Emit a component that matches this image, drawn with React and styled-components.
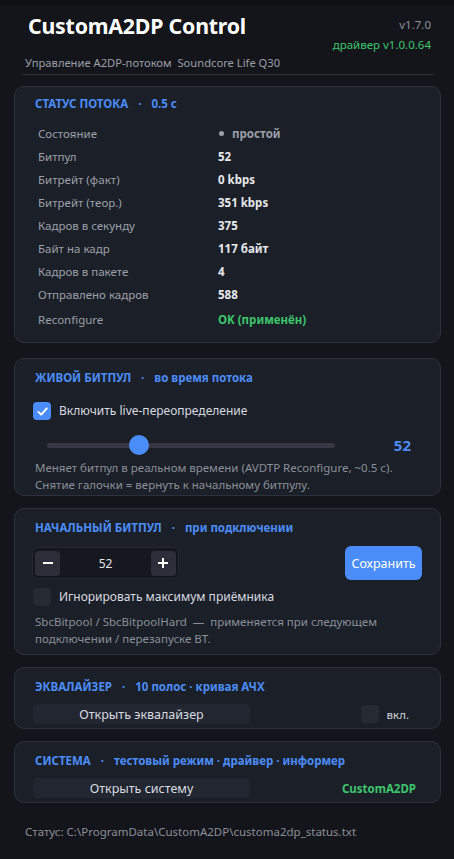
import React from "react";
import styled, { createGlobalStyle } from "styled-components";

const GlobalStyle = createGlobalStyle`
  html, body {
    margin: 0;
    padding: 0;
    background: #14151a;
  }
  * {
    box-sizing: border-box;
  }
`;

const BLUE = "#4b8df8";
const GREEN = "#3cc56c";

const Window = styled.div`
  width: 454px;
  min-height: 859px;
  background: #14151a;
  border-top: 5px solid #0e0f12;
  padding: 0 13px 0 14px;
  font-family: "Noto Sans", "Open Sans", sans-serif;
  color: #e4e6ea;
  display: flex;
  flex-direction: column;
`;

const Header = styled.header`
  display: flex;
  justify-content: space-between;
  align-items: flex-start;
  padding: 6px 10px 0 14px;
`;

const Title = styled.h1`
  margin: 0;
  font-size: 21.3px;
  line-height: 30px;
  font-weight: 700;
  color: #ffffff;
  letter-spacing: -0.2px;
`;

const Versions = styled.div`
  display: flex;
  flex-direction: column;
  align-items: flex-end;
  padding-top: 4px;
  font-size: 11.5px;
  line-height: 20px;
`;

const Version = styled.span`
  color: ${(p) => p.$color || "#8b909b"};
`;

const Subtitle = styled.div`
  padding: 0 0 0 11px;
  font-size: 11.2px;
  line-height: 16px;
  color: #9a9ea8;
`;

const Divider = styled.hr`
  margin: 3px 7px 11px 8px;
  border: none;
  border-top: 1px solid #2a2d36;
`;

const Panels = styled.div`
  display: flex;
  flex-direction: column;
  gap: 12px;
`;

const Panel = styled.section`
  background: #1b1f27;
  border: 1px solid #2c313b;
  border-radius: 10px;
  margin-bottom: ${(p) => p.$after ?? 0}px;
  padding: ${(p) => p.$top ?? 11}px 18px ${(p) => p.$bottom ?? 4}px 18px;
  display: flex;
  flex-direction: column;
`;

const PanelTitle = styled.div`
  padding-left: 2px;
  font-size: 11.5px;
  line-height: 16px;
  font-weight: 700;
  color: ${BLUE};
  white-space: nowrap;
`;

const Dot = styled.span`
  margin: 0 10px;
`;

const StatGrid = styled.div`
  display: grid;
  grid-template-columns: 180px 1fr;
  grid-auto-rows: 23px;
  align-items: center;
  margin-top: 10px;
  padding-left: 5px;
  font-size: 11.5px;
`;

const Label = styled.span`
  color: #9ba0aa;
  ${(p) => p.$last && "margin-top: 4px;"}
`;

const Value = styled.span`
  font-weight: 700;
  color: ${(p) => p.$color || "#e6e8ec"};
  ${(p) => p.$last && "margin-top: 4px;"}
`;

const StateDot = styled.span`
  display: inline-block;
  width: 5px;
  height: 5px;
  border-radius: 50%;
  background: #9ba0aa;
  margin: 0 8px 2px 1px;
  vertical-align: middle;
`;

const CheckRow = styled.label`
  display: flex;
  align-items: center;
  gap: 8px;
  margin-top: ${(p) => p.$mt || 0}px;
  font-size: 12px;
  line-height: 20px;
  color: #d8dbe0;
  white-space: nowrap;
`;

const Box = styled.span`
  width: 18px;
  height: 18px;
  flex: none;
  border-radius: 4px;
  background: ${(p) => (p.$checked ? BLUE : "#262a33")};
  display: flex;
  align-items: center;
  justify-content: center;
`;

const SliderRow = styled.div`
  display: flex;
  align-items: center;
  height: 24px;
  margin-top: 12px;
  padding: 0 11px 0 14px;
`;

const Track = styled.div`
  position: relative;
  width: 288px;
  height: 5px;
  border-radius: 3px;
  background: #363944;
`;

const Thumb = styled.div`
  position: absolute;
  top: 50%;
  width: 20px;
  height: 20px;
  margin: -10px 0 0 -10px;
  border-radius: 50%;
  background: ${BLUE};
`;

const SliderValue = styled.span`
  margin-left: auto;
  font-size: 15px;
  font-weight: 700;
  color: ${BLUE};
`;

const Note = styled.p`
  margin: ${(p) => p.$mt || 0}px 0 0 2px;
  font-size: 11.5px;
  line-height: 17px;
  color: #8a8f99;
`;

const BitpoolRow = styled.div`
  display: flex;
  align-items: center;
  justify-content: space-between;
  margin-top: 10px;
`;

const Spin = styled.div`
  display: flex;
  align-items: center;
  justify-content: space-between;
  width: 147px;
  height: 32px;
  padding: 0 2px;
  margin-left: -1px;
  border-radius: 6px;
  background: #15181e;
  border: 1px solid #242831;
  font-size: 12px;
  color: #e4e6ea;
`;

const SpinButton = styled.button`
  width: 25px;
  height: 25px;
  border: none;
  border-radius: 4px;
  background: #2c2f3a;
  padding: 0;
  display: flex;
  align-items: center;
  justify-content: center;
`;

const SaveButton = styled.button`
  width: 77px;
  height: 34px;
  padding: 0;
  border: none;
  border-radius: 6px;
  background: ${BLUE};
  color: #ffffff;
  font-family: inherit;
  font-size: 12.5px;
`;

const ActionRow = styled.div`
  display: flex;
  align-items: center;
  margin-top: 9px;
`;

const WideButton = styled.button`
  width: 217px;
  height: 20px;
  border: none;
  border-radius: 4px;
  background: #222630;
  color: #d9dce1;
  font-family: inherit;
  font-size: 12.5px;
  padding: 0;
`;

const SideCheck = styled.label`
  margin-left: auto;
  margin-right: 13px;
  display: flex;
  align-items: center;
  gap: 8px;
  font-size: 11.5px;
  color: #d4d7dd;
`;

const SideTag = styled.span`
  margin-left: auto;
  margin-right: 6px;
  font-size: 11.5px;
  font-weight: 700;
  color: ${GREEN};
`;

const Footer = styled.div`
  padding: 21px 0 0 11px;
  font-size: 11.5px;
  line-height: 16px;
  color: #8a8f99;
`;

const stats = [
  ["Битпул", "52"],
  ["Битрейт (факт)", "0 kbps"],
  ["Битрейт (теор.)", "351 kbps"],
  ["Кадров в секунду", "375"],
  ["Байт на кадр", "117 байт"],
  ["Кадров в пакете", "4"],
  ["Отправлено кадров", "588"],
];

const Tick = () => (
  <svg width="13" height="13" viewBox="0 0 14 14">
    <path d="M2.5 7.4 L5.6 10.4 L11.6 3.6" fill="none" stroke="#fff" strokeWidth="2" strokeLinecap="round" strokeLinejoin="round" />
  </svg>
);

const Minus = () => (
  <svg width="12" height="12" viewBox="0 0 12 12">
    <path d="M1 6 H11" stroke="#fff" strokeWidth="2" />
  </svg>
);

const Plus = () => (
  <svg width="12" height="12" viewBox="0 0 12 12">
    <path d="M1 6 H11 M6 1 V11" stroke="#fff" strokeWidth="2" />
  </svg>
);

export default function App() {
  const bitpool = 52;
  return (
    <>
      <GlobalStyle />
      <Window>
        <Header>
          <Title>CustomA2DP Control</Title>
          <Versions>
            <Version>v1.7.0</Version>
            <Version $color={GREEN}>драйвер v1.0.0.64</Version>
          </Versions>
        </Header>
        <Subtitle>Управление A2DP-потоком&nbsp; Soundcore Life Q30</Subtitle>
        <Divider />

        <Panels>
          <Panel $top={9} $bottom={13} $after={3}>
            <PanelTitle>
              СТАТУС ПОТОКА<Dot>·</Dot>0.5 с
            </PanelTitle>
            <StatGrid>
              <Label>Состояние</Label>
              <Value $color="#9ba0aa">
                <StateDot />
                простой
              </Value>
              {stats.map(([k, v]) => (
                <React.Fragment key={k}>
                  <Label>{k}</Label>
                  <Value>{v}</Value>
                </React.Fragment>
              ))}
              <Label $last>Reconfigure</Label>
              <Value $last $color={GREEN}>
                OK (применён)
              </Value>
            </StatGrid>
          </Panel>

          <Panel $bottom={2}>
            <PanelTitle>
              ЖИВОЙ БИТПУЛ<Dot>·</Dot>во время потока
            </PanelTitle>
            <CheckRow $mt={15}>
              <Box $checked>
                <Tick />
              </Box>
              Включить live-переопределение
            </CheckRow>
            <SliderRow>
              <Track>
                <Thumb style={{ left: `${(bitpool / 162) * 100}%` }} />
              </Track>
              <SliderValue>{bitpool}</SliderValue>
            </SliderRow>
            <Note $mt={2}>
              Меняет битпул в реальном времени (AVDTP Reconfigure, ~0.5 с).
              <br />
              Снятие галочки = вернуть к начальному битпулу.
            </Note>
          </Panel>

          <Panel $bottom={7}>
            <PanelTitle>
              НАЧАЛЬНЫЙ БИТПУЛ<Dot>·</Dot>при подключении
            </PanelTitle>
            <BitpoolRow>
              <Spin>
                <SpinButton>
                  <Minus />
                </SpinButton>
                <span>{bitpool}</span>
                <SpinButton>
                  <Plus />
                </SpinButton>
              </Spin>
              <SaveButton>Сохранить</SaveButton>
            </BitpoolRow>
            <CheckRow $mt={7}>
              <Box />
              Игнорировать максимум приёмника
            </CheckRow>
            <Note $mt={6}>
              SbcBitpool / SbcBitpoolHard&nbsp; — &nbsp;применяется при следующем
              <br />
              подключении / перезапуске BT.
            </Note>
          </Panel>

          <Panel>
            <PanelTitle>
              ЭКВАЛАЙЗЕР<Dot>·</Dot>10 полос · кривая АЧХ
            </PanelTitle>
            <ActionRow>
              <WideButton>Открыть эквалайзер</WideButton>
              <SideCheck>
                <Box />
                вкл.
              </SideCheck>
            </ActionRow>
          </Panel>

          <Panel>
            <PanelTitle>
              СИСТЕМА<Dot>·</Dot>тестовый режим · драйвер · информер
            </PanelTitle>
            <ActionRow>
              <WideButton>Открыть систему</WideButton>
              <SideTag>CustomA2DP</SideTag>
            </ActionRow>
          </Panel>
        </Panels>

        <Footer>Статус: C:\ProgramData\CustomA2DP\customa2dp_status.txt</Footer>
      </Window>
    </>
  );
}
